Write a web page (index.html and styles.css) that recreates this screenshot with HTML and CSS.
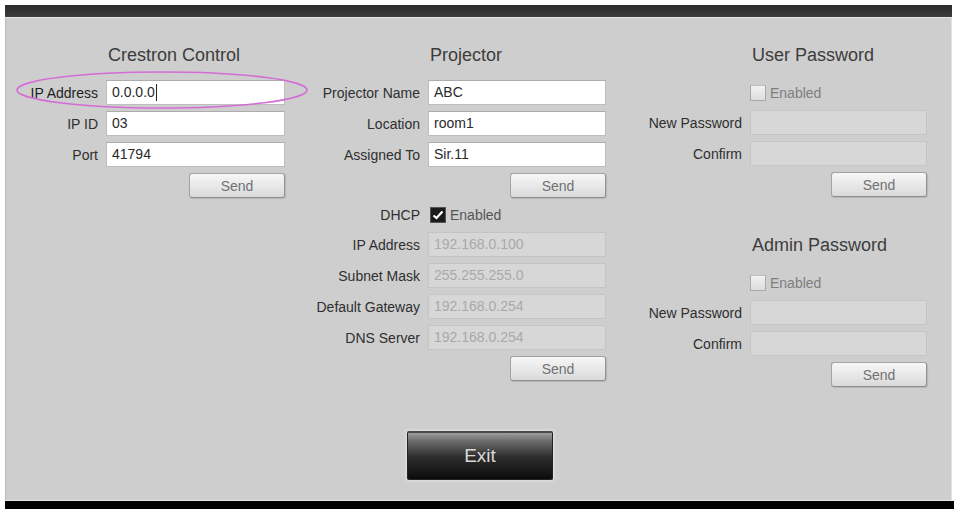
FILE: index.html
```html
<!DOCTYPE html>
<html lang="en">
  <head>
    <meta charset="UTF-8" />
    <meta name="viewport" content="width=device-width, initial-scale=1.0" />
    <title>Network Settings</title>
    <link rel="stylesheet" href="styles.css">
  </head>
  <body>
    <div class="topbar"></div>
    <main class="panel">
      <svg class="highlight" width="296" height="42" viewBox="0 0 296 42">
        <ellipse cx="148" cy="20" rx="145" ry="18" fill="none" stroke="#d46cd6" stroke-width="1.6" />
      </svg>

      <div class="columns">
        <section class="group group-crestron">
          <h2 class="group-title">Crestron Control</h2>
          <span class="label label-strong">IP Address</span>
          <div class="field">0.0.0.0<span class="caret"></span></div>
          <span class="label">IP ID</span>
          <div class="field">03</div>
          <span class="label">Port</span>
          <div class="field">41794</div>
          <button class="send">Send</button>
        </section>

        <section class="group group-projector">
          <h2 class="group-title">Projector</h2>
          <span class="label">Projector Name</span>
          <div class="field">ABC</div>
          <span class="label">Location</span>
          <div class="field">room1</div>
          <span class="label">Assigned To</span>
          <div class="field">Sir.11</div>
          <button class="send">Send</button>

          <span class="label check-label">DHCP</span>
          <div class="check-row">
            <svg class="checkbox" width="16" height="16" viewBox="0 0 16 16">
              <rect x="0.5" y="0.5" width="15" height="15" fill="#1b1b1b" stroke="#555" />
              <polyline points="3.5,8.5 6.5,11 12.5,4.5" fill="none" stroke="#fff" stroke-width="2.2" />
            </svg>
            <span class="check-text">Enabled</span>
          </div>
          <span class="label">IP Address</span>
          <div class="field field-off">192.168.0.100</div>
          <span class="label">Subnet Mask</span>
          <div class="field field-off">255.255.255.0</div>
          <span class="label">Default Gateway</span>
          <div class="field field-off">192.168.0.254</div>
          <span class="label">DNS Server</span>
          <div class="field field-off">192.168.0.254</div>
          <button class="send">Send</button>
        </section>

        <div class="stack">
          <section class="group group-password">
            <h2 class="group-title">User Password</h2>
            <div class="check-row check-row-off">
              <span class="box"></span>
              <span class="check-text">Enabled</span>
            </div>
            <span class="label">New Password</span>
            <div class="field field-off"></div>
            <span class="label">Confirm</span>
            <div class="field field-off"></div>
            <button class="send">Send</button>
          </section>

          <section class="group group-password group-admin">
            <h2 class="group-title">Admin Password</h2>
            <div class="check-row check-row-off">
              <span class="box"></span>
              <span class="check-text">Enabled</span>
            </div>
            <span class="label">New Password</span>
            <div class="field field-off"></div>
            <span class="label">Confirm</span>
            <div class="field field-off"></div>
            <button class="send">Send</button>
          </section>
        </div>
      </div>

      <div class="exit-row">
        <button class="exit">Exit</button>
      </div>
    </main>
    <div class="bottombar"></div>
  </body>
</html>
```

FILE: styles.css
```css
body {
  margin: 0;
  padding: 5px 2px 0 5px;
  background-color: #fff;
  font-family: 'Liberation Sans', Arial, sans-serif;
  font-size: 14px;
  color: #333;
}
.topbar {
  height: 12px;
  background: linear-gradient(#2a2a2a, #3d3d3d);
  border-bottom: 1px solid #e6e6e6;
}
.panel {
  position: relative;
  display: flex;
  flex-direction: column;
  height: 482px;
  box-sizing: border-box;
  background-color: #cecece;
  border-left: 1px solid #b9b9b9;
  border-right: 1px solid #e2e2e2;
}
.highlight {
  position: absolute;
  left: 8px;
  top: 52px;
}
.columns {
  display: flex;
  align-items: flex-start;
  padding-top: 25px;
}
.group {
  display: grid;
  column-gap: 8px;
  row-gap: 6px;
  align-content: start;
}
.group-crestron {
  grid-template-columns: 92px 179px;
}
.group-projector {
  grid-template-columns: 135px 178px;
}
.group-password {
  grid-template-columns: 136px 177px;
}
.group-admin {
  margin-top: 36px;
}
.group-title {
  grid-column: 2;
  margin: 0 0 7px 2px;
  font-size: 18px;
  font-weight: normal;
  line-height: 24px;
  color: #3c3c3c;
}
.label {
  grid-column: 1;
  align-self: center;
  text-align: right;
  color: #2f2f2f;
  white-space: nowrap;
}
.label-strong {
  color: #1e1e1e;
}
.field {
  grid-column: 2;
  height: 25px;
  box-sizing: border-box;
  padding: 0 5px;
  line-height: 23px;
  background-color: #fff;
  border: 1px solid #bdbdbd;
  border-top-color: #acacac;
  color: #2a2a2a;
  display: flex;
  align-items: center;
}
.field-off {
  background-color: #d7d7d7;
  border-color: #c4c4c4;
  color: #a9a9a9;
}
.caret {
  display: inline-block;
  width: 1px;
  height: 17px;
  margin-left: 1px;
  background-color: #222;
}
.send {
  grid-column: 2;
  justify-self: end;
  width: 96px;
  height: 25px;
  padding: 0;
  font-family: inherit;
  font-size: 14px;
  color: #727272;
  background: linear-gradient(#f7f7f7, #dadada);
  border: 1px solid #a3a3a3;
  border-bottom-color: #8c8c8c;
  border-right-color: #939393;
  border-radius: 3px;
  box-shadow: 1px 1px 1px rgba(0, 0, 0, 0.12);
}
.check-label {
  height: 22px;
  line-height: 22px;
}
.check-row {
  grid-column: 2;
  display: flex;
  align-items: center;
  gap: 4px;
  height: 22px;
  padding-left: 2px;
}
.check-row-off {
  margin-top: 2px;
  padding-left: 0;
}
.check-text {
  color: #555;
}
.check-row-off .check-text {
  color: #7e7e7e;
}
.box {
  width: 14px;
  height: 14px;
  background: linear-gradient(#f2f2f2, #dcdcdc);
  border: 1px solid #a9a9a9;
  border-top-color: #bdbdbd;
}
.exit-row {
  margin-top: auto;
  padding: 0 0 20px 3px;
  display: flex;
  justify-content: center;
}
.exit {
  width: 146px;
  height: 49px;
  padding: 0;
  font-family: inherit;
  font-size: 19px;
  color: #d9d9d9;
  background: linear-gradient(#9c9c9c 0%, #6c6c6c 18%, #303030 50%, #0b0b0b 100%);
  border: 1px solid #222;
  border-top: 2px solid #4a4a4a;
  border-radius: 2px;
  box-shadow: 0 0 3px 1px rgba(255, 255, 255, 0.45);
}
.bottombar {
  height: 8px;
  margin-right: -2px;
  background-color: #000;
  border-top: 1px solid #e8e8e8;
}
```
